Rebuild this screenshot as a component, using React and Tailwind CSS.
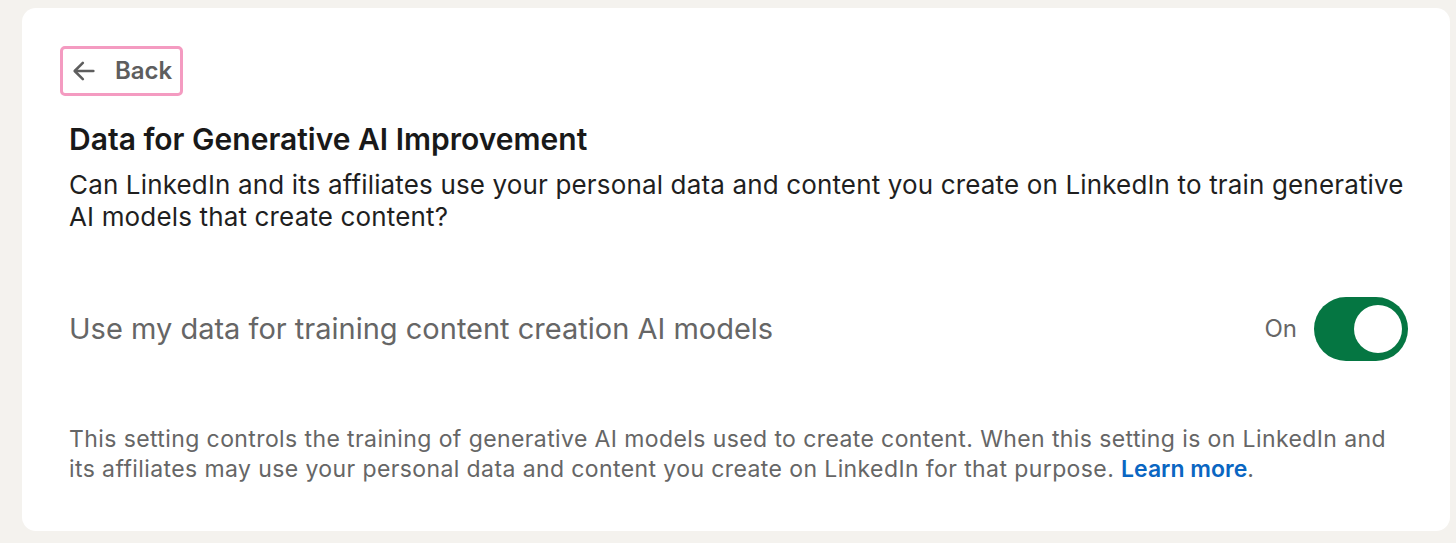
import React, { useState } from 'react';

const ArrowLeft = () => (
  <svg width="28" height="28" viewBox="0 0 24 24" fill="none" stroke="#5e5e5e" strokeWidth="2.2" strokeLinecap="round" strokeLinejoin="round">
    <path d="M20 12H5" />
    <path d="M11 5l-7 7 7 7" />
  </svg>
);

const App = () => {
  const [enabled, setEnabled] = useState(true);

  return (
    <div className="min-h-[543px] bg-[#f4f2ee] pt-[8px] pl-[22px] font-['Inter',sans-serif]">
      <div className="w-[1428px] h-[523px] rounded-[14px] bg-white pt-[38px] pl-[47px] pr-[42px]">
        {/* Back */}
        <button className="-ml-[9px] h-[50px] flex items-center gap-[17px] rounded-[5px] border-[3px] border-[#f49bc1] pl-[7px] pr-[8px] text-[24px] font-semibold text-[#5e5e5e]">
          <ArrowLeft />
          <span>Back</span>
        </button>

        {/* Heading */}
        <h1 className="mt-[25px] text-[30px] leading-[36px] font-semibold text-[#191919]">
          Data for Generative AI Improvement
        </h1>
        <p className="mt-[12px] text-[26px] leading-[32px] tracking-[0.15px] text-[#1f1f1f]">
          Can LinkedIn and its affiliates use your personal data and content you create on LinkedIn to train generative AI models that create content?
        </p>

        {/* Toggle row */}
        <div className="mt-[64px] flex items-center justify-between">
          <span className="text-[29px] text-[#666666]">Use my data for training content creation AI models</span>
          <div className="flex items-center gap-[17px]">
            <span className="text-[24px] text-[#666666]">{enabled ? 'On' : 'Off'}</span>
            <button
              onClick={() => setEnabled(!enabled)}
              className="w-[94px] h-[64px] rounded-full bg-[#057642] flex items-center justify-end px-[6px]"
            >
              <span className="w-[48px] h-[48px] rounded-full bg-white" />
            </button>
          </div>
        </div>

        {/* Footnote */}
        <p className="mt-[63px] text-[23px] leading-[30px] tracking-[0.4px] text-[#666666]">
          This setting controls the training of generative AI models used to create content. When this setting is on LinkedIn and its affiliates may use your personal data and content you create on LinkedIn for that purpose.{' '}
          <a href="#" className="font-semibold tracking-normal text-[#0a66c2]">Learn more</a>.
        </p>
      </div>
    </div>
  );
};

export default App;
